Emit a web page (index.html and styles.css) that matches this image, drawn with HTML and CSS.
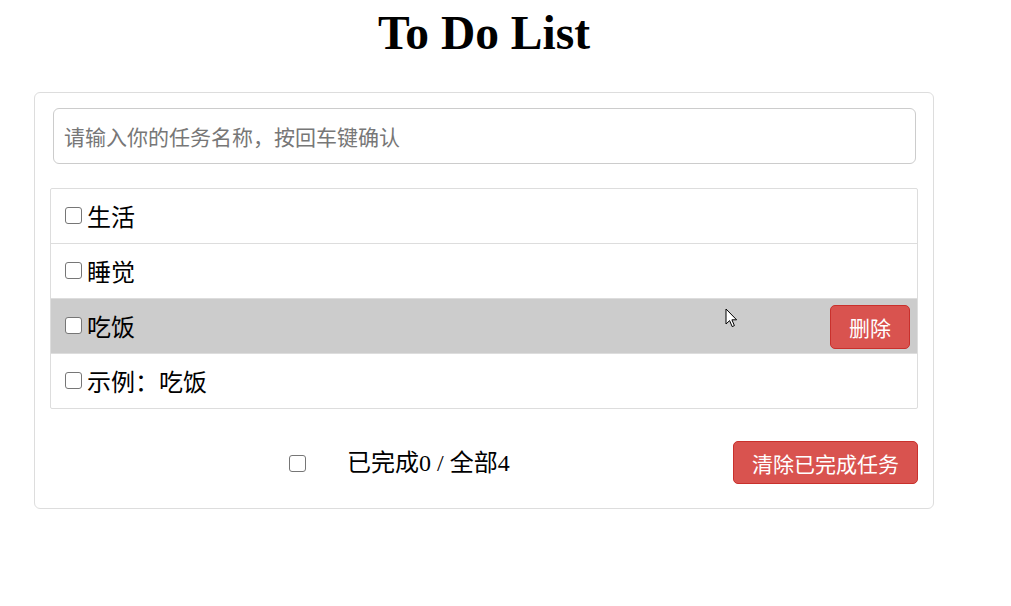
FILE: index.html
```html
<!DOCTYPE html>
<html lang="zh-CN">
<head>
<meta charset="utf-8">
<title>To Do List</title>
<link rel="stylesheet" href="styles.css">
</head>
<body>
<div class="app">
  <h1 class="title">To Do List</h1>
  <div class="todo-wrap">
    <input class="todo-input" type="text" placeholder="请输入你的任务名称，按回车键确认">
    <ul class="todo-list">
      <li class="todo-item"><label class="item-label"><input class="check" type="checkbox"><span>生活</span></label></li>
      <li class="todo-item"><label class="item-label"><input class="check" type="checkbox"><span>睡觉</span></label></li>
      <li class="todo-item is-hover"><label class="item-label"><input class="check" type="checkbox"><span>吃饭</span></label><button class="btn btn-danger btn-delete">删除</button></li>
      <li class="todo-item"><label class="item-label"><input class="check" type="checkbox"><span>示例：吃饭</span></label></li>
    </ul>
    <div class="todo-footer">
      <input class="check footer-check" type="checkbox">
      <span class="footer-count">已完成0 / 全部4</span>
      <button class="btn btn-danger btn-clear">清除已完成任务</button>
    </div>
  </div>
</div>
<svg class="cursor" width="14" height="22" viewBox="0 0 14 22" aria-hidden="true">
  <path d="M1 1 L1 16 L4.6 12.6 L7.2 18.6 L9.4 17.6 L6.9 11.8 L11.6 11.8 Z" fill="#fff" stroke="#000" stroke-width="1" stroke-linejoin="round"/>
</svg>
</body>
</html>
```

FILE: styles.css
```css
html, body {
  margin: 0;
  padding: 0;
  background: #fff;
}

body {
  font-family: "Liberation Serif", "Noto Sans CJK SC", serif;
  color: #000;
  position: relative;
  min-height: 606px;
}

.app {
  width: 900px;
  margin-left: 34px;
}

.title {
  margin: 7px 0 0;
  font-family: "Liberation Serif", serif;
  font-size: 47.5px;
  font-weight: bold;
  line-height: 52px;
  text-align: center;
}

.todo-wrap {
  margin-top: 33px;
  box-sizing: border-box;
  width: 900px;
  border: 1px solid #ddd;
  border-radius: 6px;
  padding: 15px;
}

.todo-input {
  display: block;
  box-sizing: border-box;
  width: 863px;
  height: 56px;
  margin: 0 0 0 3px;
  padding: 0 10px;
  border: 1px solid #ccc;
  border-radius: 6px;
  font-family: "Noto Sans CJK SC", sans-serif;
  font-size: 21px;
  outline: none;
}

.todo-input::placeholder {
  color: #777;
}

.todo-list {
  list-style: none;
  margin: 24px 0 0;
  padding: 0;
  width: 868px;
  box-sizing: border-box;
  border: 1px solid #ddd;
  border-radius: 2px;
}

.todo-item {
  display: flex;
  align-items: center;
  justify-content: space-between;
  height: 54px;
  padding: 0 7px 0 14px;
  border-top: 1px solid #ddd;
}

.todo-item:first-child {
  border-top: none;
}

.todo-item.is-hover {
  background: #ccc;
}

.item-label {
  display: flex;
  align-items: center;
  gap: 5px;
  font-size: 24px;
  line-height: 30px;
  padding-top: 3px;
}

.check {
  -webkit-appearance: none;
  appearance: none;
  box-sizing: border-box;
  width: 17px;
  height: 17px;
  margin: 0;
  flex: none;
  border: 1.5px solid #767676;
  border-radius: 3px;
  background: #fff;
}

.item-label .check {
  margin-top: -4px;
}

.btn {
  box-sizing: border-box;
  font-family: "Noto Sans CJK SC", sans-serif;
  font-size: 21px;
  line-height: 24px;
  color: #fff;
  border-radius: 5px;
  padding: 0;
  cursor: pointer;
}

.btn-danger {
  background: #d9534f;
  border: 1px solid #c9302c;
}

.btn-delete {
  width: 80px;
  height: 44px;
  margin-top: 1px;
}

.todo-footer {
  display: flex;
  align-items: center;
  margin: 32px 0 9px;
  height: 43px;
}

.footer-check {
  margin-left: 239px;
  margin-top: 2px;
}

.footer-count {
  margin-left: 41px;
  font-size: 24px;
  line-height: 30px;
}

.btn-clear {
  margin-left: auto;
  width: 185px;
  height: 43px;
}

.cursor {
  position: absolute;
  left: 725px;
  top: 308px;
  pointer-events: none;
}
```
